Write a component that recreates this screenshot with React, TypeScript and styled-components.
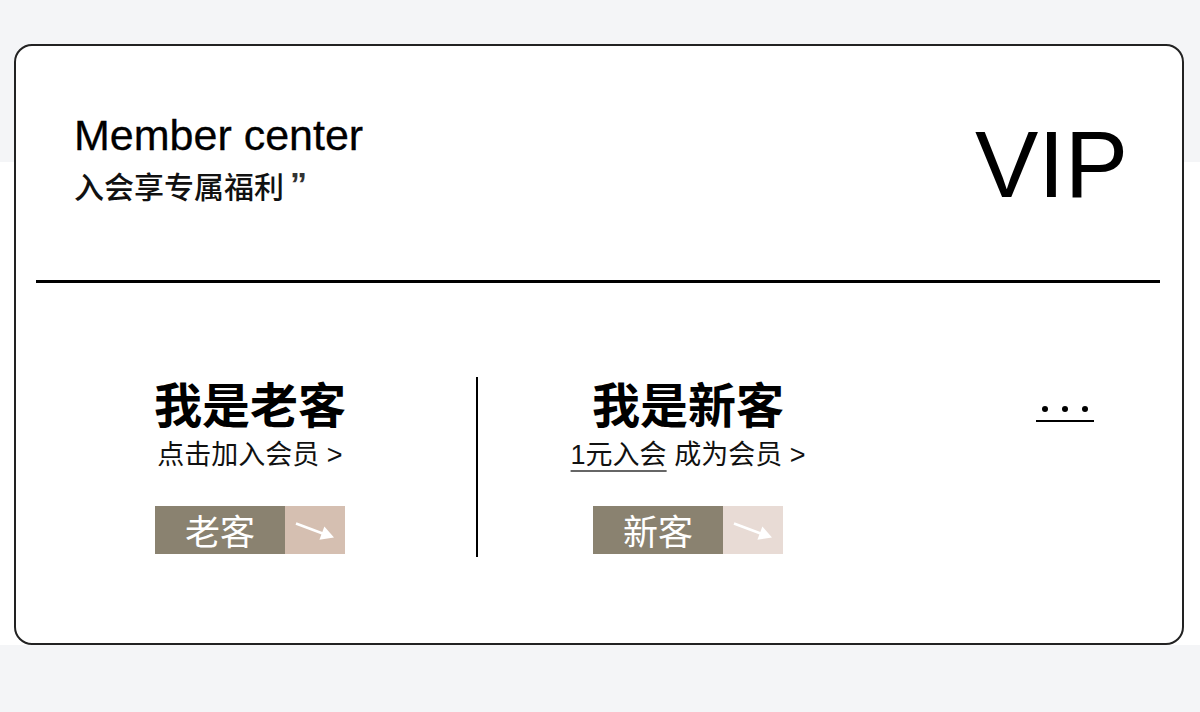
import React from "react";
import styled, { createGlobalStyle } from "styled-components";

const GlobalStyle = createGlobalStyle`
  html, body {
    margin: 0;
    padding: 0;
  }
  body {
    width: 1200px;
    height: 712px;
    overflow: hidden;
    background: linear-gradient(
      to bottom,
      #f4f5f7 0px,
      #f4f5f7 162px,
      #ffffff 162px,
      #ffffff 645px,
      #f4f5f7 645px,
      #f4f5f7 712px
    );
    font-family: "Liberation Sans", "Noto Sans CJK SC", Arial, sans-serif;
    color: #000;
  }
`;

const Page = styled.div`
  padding: 44px 16px 0 14px;
`;

const Card = styled.section`
  box-sizing: border-box;
  width: 1170px;
  height: 601px;
  border: 2px solid #222;
  border-radius: 18px;
  background: #fff;
  display: flex;
  flex-direction: column;
`;

const Header = styled.header`
  box-sizing: border-box;
  height: 234px;
  padding: 68px 54px 0 58px;
  display: flex;
  justify-content: space-between;
  align-items: flex-start;
`;

const TitleBlock = styled.div`
  display: flex;
  flex-direction: column;
`;

const EnTitle = styled.h1`
  margin: 0;
  font-family: "Liberation Sans", Arial, sans-serif;
  font-weight: 400;
  font-size: 43px;
  line-height: 42px;
  color: #000;
  -webkit-text-stroke: 0.3px #000;
`;

const CnSubtitle = styled.p`
  margin: 14px 0 0 0;
  font-family: "Noto Sans CJK SC", sans-serif;
  font-weight: 500;
  font-size: 30px;
  line-height: 30px;
  color: #111;
  display: flex;
  align-items: flex-start;
`;

const Quote = styled.span`
  font-family: "Liberation Sans", Arial, sans-serif;
  font-weight: 700;
  font-size: 34px;
  line-height: 30px;
  color: #333;
  margin-left: 6px;
  margin-top: -1px;
`;

const Vip = styled.div`
  margin-top: 3px;
  font-family: "Liberation Sans", Arial, sans-serif;
  font-size: 95px;
  line-height: 95px;
  color: #000;
`;

const Rule = styled.hr`
  margin: 0 22px 0 20px;
  border: 0;
  height: 3px;
  background: #000;
`;

const Lower = styled.div`
  display: flex;
  align-items: flex-start;
  padding: 94px 0 0 139px;
`;

const Column = styled.div<{ $width: number }>`
  width: ${(p) => p.$width}px;
  display: flex;
  flex-direction: column;
  align-items: center;
  flex-shrink: 0;
`;

const ColTitle = styled.h2`
  margin: 1px 0 0;
  font-family: "Noto Sans CJK SC", sans-serif;
  font-weight: 700;
  font-size: 48px;
  line-height: 48px;
  color: #000;
  white-space: nowrap;
`;

const ColSub = styled.p`
  margin: 16px 0 0;
  font-family: "Liberation Sans", "Noto Sans CJK SC", sans-serif;
  font-weight: 400;
  font-size: 27px;
  line-height: 27px;
  color: #111;
  white-space: nowrap;
`;

const Underlined = styled.span`
  text-decoration: underline;
  text-decoration-color: #666;
  text-decoration-thickness: 2px;
  text-underline-offset: 6px;
`;

const Btn = styled.button<{ $accent: string }>`
  margin-top: 37px;
  padding: 0;
  border: 0;
  width: 190px;
  height: 48px;
  display: grid;
  grid-template-columns: 130px 60px;
  background: transparent;
  cursor: pointer;
  & > span:last-child {
    background: ${(p) => p.$accent};
  }
`;

const BtnLabel = styled.span`
  background: #8a8270;
  color: #fff;
  font-family: "Noto Sans CJK SC", sans-serif;
  font-size: 35px;
  line-height: 48px;
  text-align: center;
`;

const BtnArrow = styled.span`
  display: block;
  width: 60px;
  height: 48px;
`;

const Divider = styled.div`
  width: 2px;
  height: 180px;
  background: #000;
  margin: 0 92px 0 131px;
  flex-shrink: 0;
`;

const More = styled.div`
  margin: 29px 0 0 230px;
  width: 58px;
  padding-bottom: 8px;
  border-bottom: 2px solid #000;
  display: flex;
  justify-content: center;
  gap: 14px;
`;

const Dot = styled.span`
  width: 6px;
  height: 6px;
  border-radius: 50%;
  background: #000;
`;

const Arrow = () => (
  <svg width="60" height="48" viewBox="0 0 60 48">
    <line x1="11" y1="17.5" x2="39" y2="28" stroke="#fff" strokeWidth="2.6" />
    <polygon points="49,31.5 34.4,33.8 39.4,20.4" fill="#fff" />
  </svg>
);

const MemberButton = ({ label, accent }: { label: string; accent: string }) => (
  <Btn $accent={accent}>
    <BtnLabel>{label}</BtnLabel>
    <BtnArrow>
      <Arrow />
    </BtnArrow>
  </Btn>
);

export default function App() {
  return (
    <>
      <GlobalStyle />
      <Page>
        <Card>
          <Header>
            <TitleBlock>
              <EnTitle>Member center</EnTitle>
              <CnSubtitle>
                入会享专属福利<Quote>”</Quote>
              </CnSubtitle>
            </TitleBlock>
            <Vip>VIP</Vip>
          </Header>
          <Rule />
          <Lower>
            <Column $width={190}>
              <ColTitle>我是老客</ColTitle>
              <ColSub>点击加入会员 &gt;</ColSub>
              <MemberButton label="老客" accent="#d5bfb1" />
            </Column>
            <Divider />
            <Column $width={236}>
              <ColTitle>我是新客</ColTitle>
              <ColSub>
                <Underlined>1元入会</Underlined> 成为会员 &gt;
              </ColSub>
              <MemberButton label="新客" accent="#e8dbd5" />
            </Column>
            <More>
              <Dot />
              <Dot />
              <Dot />
            </More>
          </Lower>
        </Card>
      </Page>
    </>
  );
}
